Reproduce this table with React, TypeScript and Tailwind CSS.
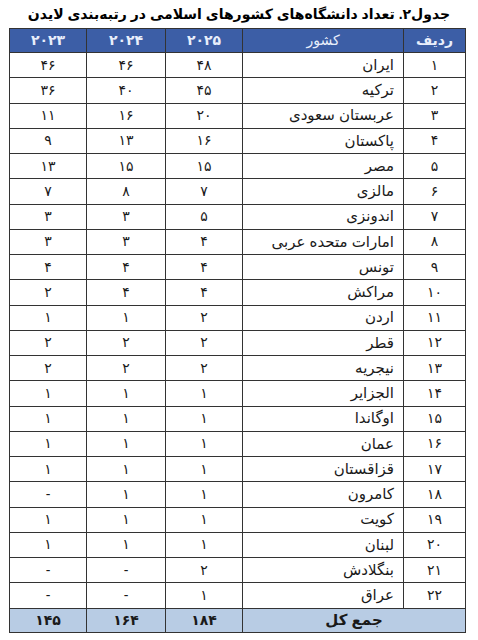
const rows: [string, string, string, string, string][] = [
  ['۱', 'ایران', '۴۸', '۴۶', '۴۶'],
  ['۲', 'ترکیه', '۴۵', '۴۰', '۳۶'],
  ['۳', 'عربستان سعودی', '۲۰', '۱۶', '۱۱'],
  ['۴', 'پاکستان', '۱۶', '۱۳', '۹'],
  ['۵', 'مصر', '۱۵', '۱۵', '۱۳'],
  ['۶', 'مالزی', '۷', '۸', '۷'],
  ['۷', 'اندونزی', '۵', '۳', '۳'],
  ['۸', 'امارات متحده عربی', '۴', '۳', '۳'],
  ['۹', 'تونس', '۴', '۴', '۴'],
  ['۱۰', 'مراکش', '۴', '۴', '۲'],
  ['۱۱', 'اردن', '۲', '۱', '۱'],
  ['۱۲', 'قطر', '۲', '۲', '۲'],
  ['۱۳', 'نیجریه', '۲', '۲', '۲'],
  ['۱۴', 'الجزایر', '۱', '۱', '۱'],
  ['۱۵', 'اوگاندا', '۱', '۱', '۱'],
  ['۱۶', 'عمان', '۱', '۱', '۱'],
  ['۱۷', 'قزاقستان', '۱', '۱', '۱'],
  ['۱۸', 'کامرون', '۱', '۱', '-'],
  ['۱۹', 'کویت', '۱', '۱', '۱'],
  ['۲۰', 'لبنان', '۱', '۱', '۱'],
  ['۲۱', 'بنگلادش', '۲', '-', '-'],
  ['۲۲', 'عراق', '۱', '-', '-'],
];

export default function App() {
  return (
    <div
      dir="rtl"
      className="w-[478px] h-[640px] bg-white text-[#1a1a1a] pt-[4px]"
      style={{ fontFamily: '"Liberation Sans", "DejaVu Sans", sans-serif' }}
    >
      {/* Title */}
      <h1 className="h-[24px] whitespace-nowrap text-center text-[14px] font-bold leading-[20px] text-black">
        جدول۲. تعداد دانشگاه‌های کشورهای اسلامی در رتبه‌بندی لایدن
      </h1>

      <table className="mr-[12px] w-[456px] border-collapse border border-[#333] table-fixed text-[14px]">
        <colgroup>
          <col className="w-[62px]" />
          <col className="w-[161px]" />
          <col className="w-[77px]" />
          <col className="w-[79px]" />
          <col className="w-[77px]" />
        </colgroup>
        <thead>
          <tr className="h-[24px] bg-[#3c5ea6] text-[#e8eefb] text-[14px]">
            <th className="border border-[#333] font-bold">ردیف</th>
            <th className="border border-[#333] font-normal">کشور</th>
            <th className="border border-[#333] font-bold tracking-[3px]">۲۰۲۵</th>
            <th className="border border-[#333] font-bold tracking-[3px]">۲۰۲۴</th>
            <th className="border border-[#333] font-bold tracking-[3px]">۲۰۲۳</th>
          </tr>
        </thead>
        <tbody>
          {rows.map(([n, name, a, b, c]) => (
            <tr key={n} className="h-[25.25px]">
              <td className="border border-[#333] text-center tracking-[1px]">{n}</td>
              <td className="border border-[#333] text-right pr-[9px] text-[15px]">{name}</td>
              <td className="border border-[#333] text-center">{a}</td>
              <td className="border border-[#333] text-center">{b}</td>
              <td className="border border-[#333] text-center">{c}</td>
            </tr>
          ))}
          <tr className="h-[24px] bg-[#b8cce4] font-bold">
            <td colSpan={2} className="border border-[#333] text-center text-[15px]">جمع کل</td>
            <td className="border border-[#333] text-center tracking-[1px]">۱۸۴</td>
            <td className="border border-[#333] text-center tracking-[1px]">۱۶۴</td>
            <td className="border border-[#333] text-center tracking-[1px]">۱۴۵</td>
          </tr>
        </tbody>
      </table>
    </div>
  );
}
